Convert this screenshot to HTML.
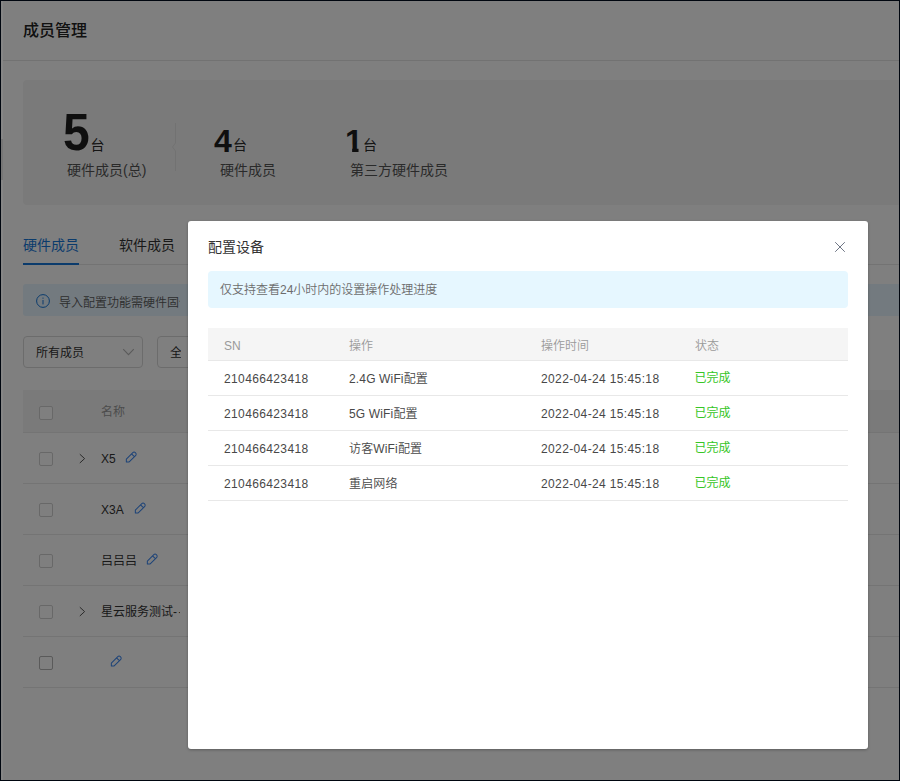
<!DOCTYPE html>
<html lang="zh-CN">
<head>
<meta charset="utf-8">
<title>成员管理</title>
<style>
*{box-sizing:border-box;margin:0;padding:0}
html,body{width:900px;height:781px;overflow:hidden;background:#fff}
body{position:relative;font-family:"Liberation Sans","Noto Sans CJK SC",sans-serif;font-size:12px;color:#333}
.abs{position:absolute}
.page{position:absolute;left:0;top:0;width:900px;height:781px;background:#fff;overflow:hidden}
.title{left:23px;top:20px;font-size:16px;line-height:22px;color:#222;font-weight:500}
.hline{left:0;top:60px;width:900px;height:1px;background:#e4e4e4}
.stats{left:23px;top:80px;width:900px;height:125px;background:#f5f5f5;border-radius:4px}
.num{font-weight:700;color:#1f1f1f;font-family:"Liberation Sans","Noto Sans CJK SC",sans-serif;line-height:1}
.unit{font-size:14px;font-weight:400;color:#2a2a2a;line-height:14px}
.lbl{font-size:14px;color:#555;line-height:20px;white-space:nowrap}
.vsep{left:175px;top:124px;width:1px;height:48px;background:#e6e6e6}
.tab{font-size:14px;line-height:20px;top:235px;white-space:nowrap}
.tabline{left:23px;top:264px;width:900px;height:1px;background:#e6e6e6}
.tabink{left:23px;top:263px;width:56px;height:2px;background:#1677d9}
.info{left:23px;top:284px;width:900px;height:32px;background:#e6f4ff;border-radius:3px}
.info span{position:absolute;left:36px;top:10px;width:121.4px;overflow:hidden;font-size:12px;line-height:18px;color:#5c5c5c;font-weight:350;white-space:nowrap}
.sel{top:336px;height:32px;border:1px solid #d9d9d9;border-radius:4px;background:#fff;font-size:12px;line-height:32px;padding-left:12px;color:#333;white-space:nowrap;overflow:hidden}
.thead{left:23px;top:390px;width:900px;height:43px;background:#f5f5f5;border-bottom:1px solid #e8e8e8}
.row{left:23px;width:900px;height:51px;border-bottom:1px solid #e8e8e8}
.cb{left:39px;width:14px;height:14px;border:1px solid #d0d0d0;border-radius:2px;background:#fff}
.cell{font-size:12px;line-height:20px;color:#333;white-space:nowrap}
.mask{left:0;top:0;width:900px;height:781px;background:rgba(0,0,0,.5)}
.frame{left:0;top:0;width:900px;height:781px;border:1px solid #00060f;pointer-events:none}
.modal{left:188px;top:221px;width:680px;height:528px;background:#fff;border-radius:3px;box-shadow:0 1px 3px rgba(0,0,0,.28)}
.mtitle{left:20px;top:16px;font-size:14px;line-height:20px;color:#333}
.alert{left:20px;top:50px;width:640px;height:37px;background:#e6f7ff;border-radius:4px}
.alert span{position:absolute;left:12px;top:10px;font-size:12px;line-height:18px;color:#6c6c6c;font-weight:350;white-space:nowrap}
.mth{left:20px;top:107px;width:640px;height:33px;background:#f5f5f5;border-bottom:1px solid #e8e8e8}
.mth span{position:absolute;top:8.5px;font-size:12px;line-height:18px;color:#9a9a9a;font-weight:350}
.mtr{left:20px;width:640px;height:35px;border-bottom:1px solid #e8e8e8}
.mtr span{position:absolute;top:9px;font-size:12px;line-height:18px;color:#484848;font-weight:350;white-space:nowrap}
.mtr span.c1,.mtr span.c3{letter-spacing:.37px}
.mtr span.c2{letter-spacing:.15px}
.mtr span.ok{color:#36c626;top:8px;left:486.5px;font-weight:400}
.c1{left:16px}.c2{left:141px}.c3{left:333px}.c4{left:487px}
</style>
</head>
<body>
<div class="page">
  <div class="abs title">成员管理</div>
  <div class="abs hline"></div>
  <div class="abs stats"></div>
  <div class="abs num" style="left:63px;top:110px;font-size:48px;transform:scaleY(1.09);transform-origin:50% 83%">5</div>
  <div class="abs unit" style="left:90.5px;top:137.5px">台</div>
  <div class="abs lbl" style="left:67px;top:160px">硬件成员(总)</div>
  <svg class="abs" style="left:168px;top:120px" width="12" height="56" viewBox="0 0 12 56"><path d="M7.5 3 L7.5 23 L4.5 27 L7.5 31 L7.5 51" fill="none" stroke="#e4e4e4" stroke-width="1"/></svg>
  <div class="abs num" style="left:214px;top:125px;font-size:32px">4</div>
  <div class="abs unit" style="left:233px;top:138px">台</div>
  <div class="abs lbl" style="left:220px;top:160px">硬件成员</div>
  <div class="abs num" style="left:345px;top:125px;font-size:32px;clip-path:polygon(0 0,100% 0,100% 60%,76% 60%,76% 100%,40% 100%,40% 60%,0 60%)">1</div>
  <div class="abs unit" style="left:363px;top:138px">台</div>
  <div class="abs lbl" style="left:350px;top:160px">第三方硬件成员</div>

  <div class="abs tab" style="left:23px;color:#1677d9">硬件成员</div>
  <div class="abs tab" style="left:119px;color:#333">软件成员</div>
  <div class="abs tabline"></div>
  <div class="abs tabink"></div>

  <div class="abs info">
    <svg class="abs" style="left:13px;top:10px" width="14" height="14" viewBox="0 0 14 14"><circle cx="7" cy="7" r="6.4" fill="none" stroke="#1677d9" stroke-width="1"/><rect x="6.5" y="6" width="1" height="4.4" fill="#1677d9"/><circle cx="7" cy="4.1" r=".7" fill="#1677d9"/></svg>
    <span>导入配置功能需硬件固件版本支持</span>
  </div>

  <div class="abs sel" style="left:23px;width:120px">所有成员
    <svg class="abs" style="left:98px;top:10px" width="13" height="10" viewBox="0 0 13 10"><path d="M1.2 2.2 L6.5 7.6 L11.8 2.2" fill="none" stroke="#b5b5b5" stroke-width="1.1"/></svg>
  </div>
  <div class="abs sel" style="left:157px;width:120px"><span style="display:block;width:11px;overflow:hidden">全部状态</span></div>

  <div class="abs thead"></div>
  <div class="abs cb" style="top:406px"></div>
  <div class="abs cell" style="left:101px;top:402px;color:#999;font-size:12px">名称</div>

  <div class="abs row" style="top:433px"></div>
  <div class="abs row" style="top:484px"></div>
  <div class="abs row" style="top:535px"></div>
  <div class="abs row" style="top:586px"></div>
  <div class="abs row" style="top:637px"></div>

  <div class="abs cb" style="top:452px"></div>
  <div class="abs cb" style="top:503px"></div>
  <div class="abs cb" style="top:554px"></div>
  <div class="abs cb" style="top:605px"></div>
  <div class="abs cb" style="top:656px;border-color:#b4b4b4"></div>

  <div class="abs cell" style="left:101px;top:449px;letter-spacing:0">X5</div>
  <div class="abs cell" style="left:101px;top:500px;letter-spacing:0">X3A</div>
  <div class="abs cell" style="left:101px;top:551px">吕吕吕</div>
  <div class="abs cell" style="left:101px;top:602px;width:79px;overflow:hidden">星云服务测试<span style="letter-spacing:1.6px">--</span></div>
  <svg class="abs" style="left:124.7px;top:450.6px" width="12.5" height="12.5" viewBox="0 0 14 14"><path d="M1.5 12.2 L1.5 9 L8.5 2 A2.3 2.3 0 0 1 11.8 5.3 L4.7 12.2 Z M7.3 3.2 L10.5 6.4" fill="none" stroke="#3a86f0" stroke-width="1.15" stroke-linejoin="round"/></svg>
  <svg class="abs" style="left:133.7px;top:501.6px" width="12.5" height="12.5" viewBox="0 0 14 14"><path d="M1.5 12.2 L1.5 9 L8.5 2 A2.3 2.3 0 0 1 11.8 5.3 L4.7 12.2 Z M7.3 3.2 L10.5 6.4" fill="none" stroke="#3a86f0" stroke-width="1.15" stroke-linejoin="round"/></svg>
  <svg class="abs" style="left:145.7px;top:552.6px" width="12.5" height="12.5" viewBox="0 0 14 14"><path d="M1.5 12.2 L1.5 9 L8.5 2 A2.3 2.3 0 0 1 11.8 5.3 L4.7 12.2 Z M7.3 3.2 L10.5 6.4" fill="none" stroke="#3a86f0" stroke-width="1.15" stroke-linejoin="round"/></svg>
  <svg class="abs" style="left:109.7px;top:654.6px" width="12.5" height="12.5" viewBox="0 0 14 14"><path d="M1.5 12.2 L1.5 9 L8.5 2 A2.3 2.3 0 0 1 11.8 5.3 L4.7 12.2 Z M7.3 3.2 L10.5 6.4" fill="none" stroke="#3a86f0" stroke-width="1.15" stroke-linejoin="round"/></svg>
  <svg class="abs" style="left:78px;top:453px" width="8" height="12" viewBox="0 0 8 12"><path d="M1.8 1.2 L6.6 5.6 L1.8 10" fill="none" stroke="#555" stroke-width="1"/></svg>
  <svg class="abs" style="left:78px;top:605.5px" width="8" height="12" viewBox="0 0 8 12"><path d="M1.8 1.2 L6.6 5.6 L1.8 10" fill="none" stroke="#555" stroke-width="1"/></svg>
</div>
<div class="abs mask"></div>
<div class="abs modal">
  <div class="abs mtitle">配置设备</div>
  <svg class="abs" style="left:646px;top:20px" width="12" height="12" viewBox="0 0 12 12"><path d="M1.2 1.2 L10.8 10.8 M10.8 1.2 L1.2 10.8" stroke="#6f7685" stroke-width="1" fill="none"/></svg>
  <div class="abs alert"><span>仅支持查看24小时内的设置操作处理进度</span></div>
  <div class="abs mth"><span class="c1">SN</span><span class="c2">操作</span><span class="c3">操作时间</span><span class="c4">状态</span></div>
  <div class="abs mtr" style="top:140px"><span class="c1">210466423418</span><span class="c2">2.4G WiFi配置</span><span class="c3">2022-04-24 15:45:18</span><span class="c4 ok">已完成</span></div>
  <div class="abs mtr" style="top:175px"><span class="c1">210466423418</span><span class="c2">5G WiFi配置</span><span class="c3">2022-04-24 15:45:18</span><span class="c4 ok">已完成</span></div>
  <div class="abs mtr" style="top:210px"><span class="c1">210466423418</span><span class="c2">访客WiFi配置</span><span class="c3">2022-04-24 15:45:18</span><span class="c4 ok">已完成</span></div>
  <div class="abs mtr" style="top:245px"><span class="c1">210466423418</span><span class="c2">重启网络</span><span class="c3">2022-04-24 15:45:18</span><span class="c4 ok">已完成</span></div>
</div>
<div class="abs" style="left:1px;top:1px;width:2px;height:779px;background:#868686"></div>
<div class="abs" style="left:1px;top:139px;width:2px;height:41px;background:#767676"></div>
<div class="abs frame"></div>
</body>
</html>
